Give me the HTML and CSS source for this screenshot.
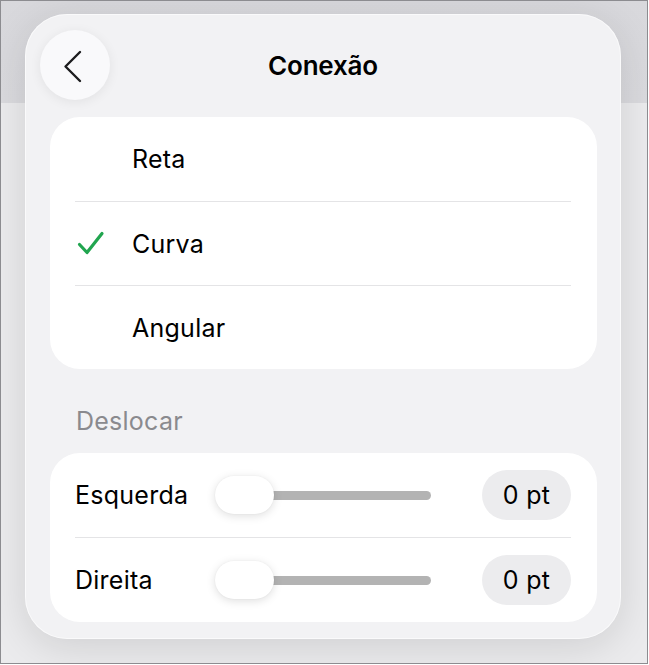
FILE: index.html
```html
<!DOCTYPE html>
<html lang="pt">
<head>
<meta charset="UTF-8">
<meta name="viewport" content="width=device-width, initial-scale=1.0">
<title>Conexão</title>
<link rel="stylesheet" href="styles.css">
</head>
<body>
<div class="screen">
    <div class="popover">
        <div class="header">
            <button class="back" aria-label="Voltar">
                <svg width="70" height="70" viewBox="0 0 70 70">
                    <path d="M40 22 L25.5 36.5 L40 51" fill="none" stroke="#1c1c1e" stroke-width="2.4" stroke-linecap="round" stroke-linejoin="round"/>
                </svg>
            </button>
            <h2>Conexão</h2>
            <span></span>
        </div>

        <ul class="card options">
            <li><span class="check"></span><span>Reta</span></li>
            <li>
                <span class="check">
                    <svg width="28" height="26" viewBox="0 0 28 26">
                        <path d="M2.5 13.5 L10 21.5 L25 2.5" fill="none" stroke="#21a54f" stroke-width="3.2" stroke-linecap="round" stroke-linejoin="round"/>
                    </svg>
                </span>
                <span>Curva</span>
            </li>
            <li><span class="check"></span><span>Angular</span></li>
        </ul>

        <div class="section-label">Deslocar</div>

        <ul class="card offsets">
            <li>
                <span class="label">Esquerda</span>
                <div class="slider"><div class="track"></div><div class="thumb"></div></div>
                <span class="value">0 pt</span>
            </li>
            <li>
                <span class="label">Direita</span>
                <div class="slider"><div class="track"></div><div class="thumb"></div></div>
                <span class="value">0 pt</span>
            </li>
        </ul>
    </div>
</div>
</body>
</html>
```

FILE: styles.css
```css
body {
    margin: 0;
    background-color: #fff;
    font-family: Inter, "Noto Sans", sans-serif;
    color: #000;
}
.screen {
    box-sizing: border-box;
    width: 648px;
    height: 664px;
    border: 1px solid #8c8c90;
    background: linear-gradient(#d8d8dc 0, #dadade 102px, #ebebed 102px);
    padding: 13px 0 0 24px;
    overflow: hidden;
}
.popover {
    box-sizing: border-box;
    width: 596px;
    height: 625px;
    padding: 16px 24px 0 25px;
    background-color: #f2f2f4;
    border-radius: 42px;
    box-shadow: 0 0 0 1px rgba(255, 255, 255, 0.6) inset, 0 8px 40px rgba(0, 0, 0, 0.12);
}
.header {
    display: grid;
    grid-template-columns: 70px 1fr 70px;
    align-items: center;
    height: 70px;
    margin: 0 -9px 0 -10px;
}
.header h2 {
    margin: 0;
    text-align: center;
    font-size: 26px;
    font-weight: 600;
    letter-spacing: -0.2px;
}
.back {
    width: 70px;
    height: 70px;
    padding: 0;
    border: none;
    border-radius: 50%;
    background-color: #f9f9fb;
    box-shadow: 0 2px 12px rgba(0, 0, 0, 0.07);
    cursor: pointer;
}
.back svg {
    display: block;
}
.card {
    list-style-type: none;
    margin: 0;
    padding: 0 26px 0 25px;
    background-color: #fff;
    border-radius: 30px;
}
.card li {
    box-sizing: border-box;
    display: flex;
    align-items: center;
    height: 84px;
    font-size: 25px;
    letter-spacing: 0.25px;
}
.card li + li {
    border-top: 1px solid #e4e4e6;
}
.options {
    margin-top: 17px;
}
.check {
    width: 57px;
    display: flex;
    align-items: center;
}
.check svg {
    display: block;
    margin-left: 2px;
}
.section-label {
    margin: 37px 0 17px 26px;
    height: 30px;
    line-height: 30px;
    font-size: 25px;
    letter-spacing: 0.25px;
    color: #8a8a8e;
}
.offsets li:last-child {
    height: 85px;
}
.label {
    width: 140px;
}
.slider {
    position: relative;
    width: 216px;
    height: 38px;
}
.track {
    position: absolute;
    left: 20px;
    right: 0;
    top: 15px;
    height: 9px;
    border-radius: 5px;
    background-color: #b3b3b3;
}
.thumb {
    position: absolute;
    left: 0;
    top: 0;
    width: 59px;
    height: 38px;
    border-radius: 19px;
    background-color: #fff;
    box-shadow: 0 2px 10px rgba(0, 0, 0, 0.13), 0 0 2px rgba(0, 0, 0, 0.05);
}
.value {
    margin-left: auto;
    width: 89px;
    height: 50px;
    line-height: 50px;
    border-radius: 25px;
    background-color: #ececee;
    text-align: center;
}
```
